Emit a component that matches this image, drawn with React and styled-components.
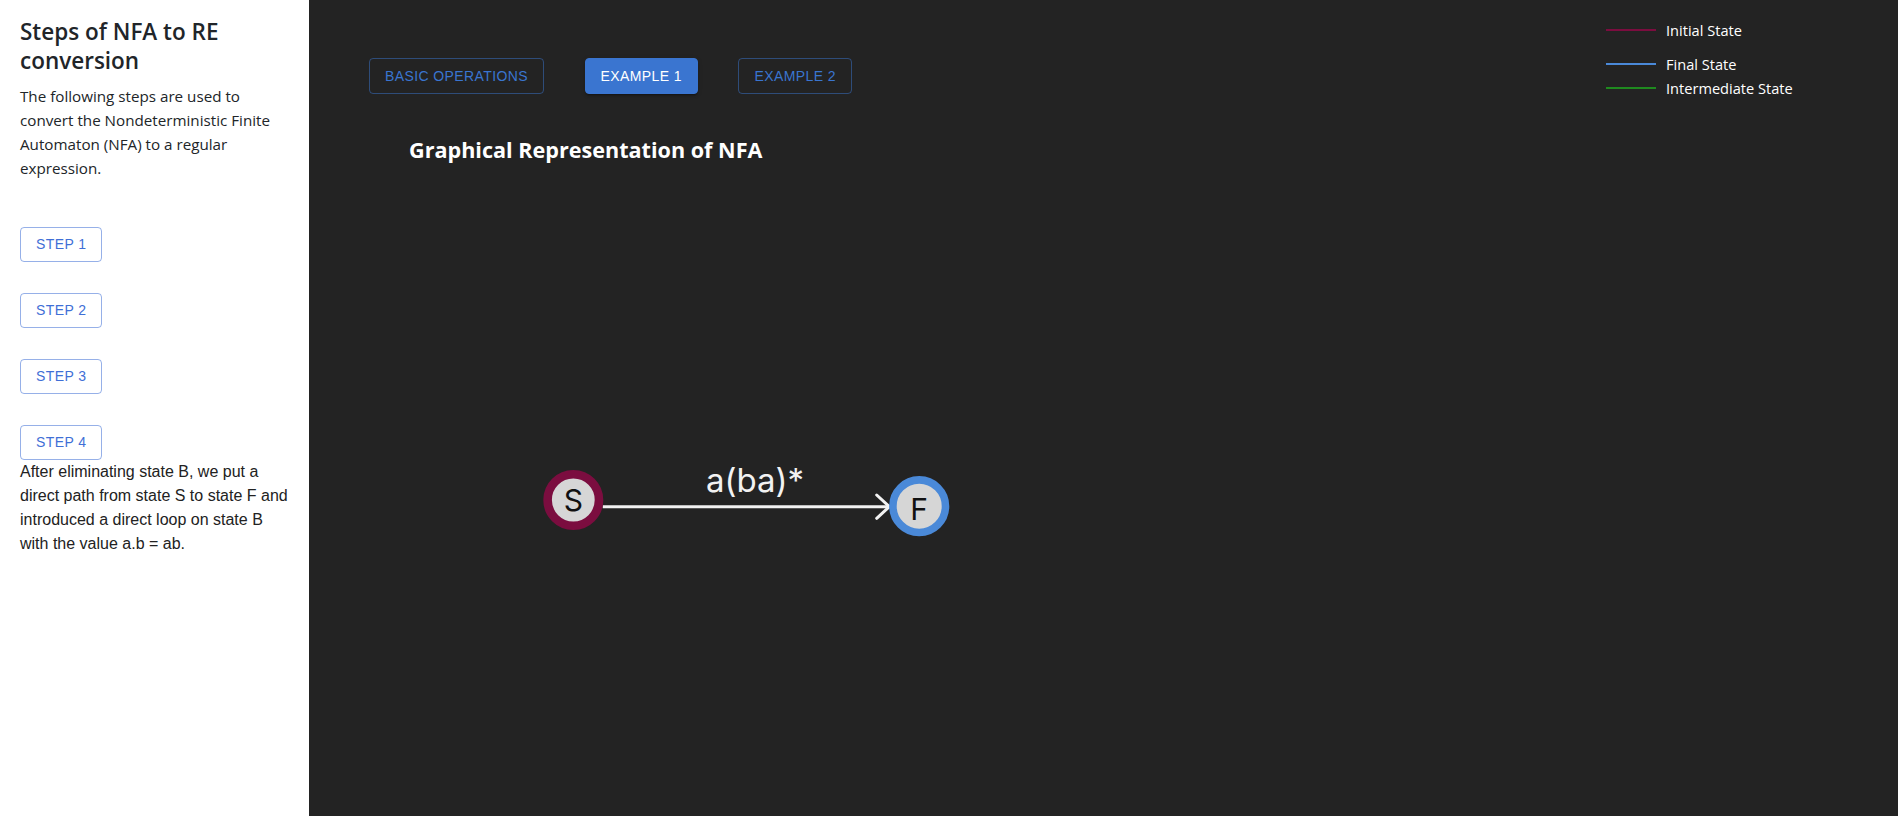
import React from "react";
import styled, { createGlobalStyle } from "styled-components";

const Global = createGlobalStyle`
  html, body { margin: 0; padding: 0; }
  body { font-family: "Open Sans", "Noto Sans", sans-serif; }
  * { box-sizing: border-box; }
`;

const Page = styled.div`
  display: flex;
  width: 100%;
  height: 100vh;
  overflow: hidden;
`;

const Sidebar = styled.aside`
  width: 309px;
  flex: 0 0 309px;
  background: #ffffff;
  padding: 18px 16px 0 20px;
  display: flex;
  flex-direction: column;
`;

const SideTitle = styled.h3`
  margin: 0 0 8px;
  font-family: "Open Sans", sans-serif;
  font-weight: 600;
  font-size: 22.5px;
  line-height: 28.8px;
  color: #212529;
`;

const Intro = styled.p`
  margin: 0;
  font-family: "Open Sans", sans-serif;
  font-size: 15.2px;
  line-height: 24px;
  color: #212529;
`;

const StepList = styled.div`
  display: flex;
  flex-direction: column;
  align-items: flex-start;
  gap: 31px;
  margin-top: 47px;
`;

const StepButton = styled.button`
  font-family: "Liberation Sans", Arial, sans-serif;
  font-size: 14px;
  font-weight: 500;
  letter-spacing: 0.4px;
  line-height: 24px;
  text-transform: uppercase;
  height: 35px;
  padding: 0 15px;
  border-radius: 4px;
  background: transparent;
  color: #3f6fd6;
  border: 1px solid rgba(63, 111, 214, 0.55);
  cursor: pointer;
`;

const StepText = styled.p`
  margin: 0;
  font-family: "Liberation Sans", Arial, sans-serif;
  font-size: 16px;
  line-height: 24.3px;
  color: #222222;
`;

const Main = styled.main`
  position: relative;
  flex: 1;
  background: #232323;
  display: flex;
  flex-direction: column;
`;

const Toolbar = styled.div`
  display: flex;
  gap: 40.5px;
  padding: 58px 0 0 60px;
  position: relative;
  z-index: 1;
`;

const TabButton = styled.button`
  font-family: "Liberation Sans", Arial, sans-serif;
  font-size: 14px;
  font-weight: 500;
  letter-spacing: 0.4px;
  line-height: 24px;
  text-transform: uppercase;
  height: 36px;
  padding: 0 15px;
  border-radius: 4px;
  cursor: pointer;
  color: ${(p) => (p.$active ? "#ffffff" : "#3a75d0")};
  background: ${(p) => (p.$active ? "#3a75d0" : "transparent")};
  border: 1px solid ${(p) => (p.$active ? "#3a75d0" : "rgba(58, 117, 208, 0.5)")};
  box-shadow: ${(p) =>
    p.$active
      ? "0 3px 1px -2px rgba(0,0,0,0.2), 0 2px 2px 0 rgba(0,0,0,0.14), 0 1px 5px 0 rgba(0,0,0,0.12)"
      : "none"};
`;

const GraphTitle = styled.h4`
  margin: 0;
  padding: 42px 0 0 100px;
  font-family: "Open Sans", sans-serif;
  font-weight: 700;
  font-size: 21.6px;
  line-height: 28px;
  color: #ffffff;
  position: relative;
  z-index: 1;
`;

const Legend = styled.div`
  position: absolute;
  top: 18px;
  left: 1297px;
  display: flex;
  flex-direction: column;
  z-index: 2;
`;

const LegendRow = styled.div`
  display: flex;
  align-items: center;
  gap: 10px;
  height: 24px;
  margin-bottom: ${(p) => p.$gap || 0}px;
`;

const LegendLine = styled.span`
  display: block;
  width: 50px;
  height: 2px;
  background: ${(p) => p.$color};
`;

const LegendLabel = styled.span`
  font-family: "Open Sans", sans-serif;
  font-size: 14.6px;
  color: #ffffff;
  line-height: 24px;
`;

const Canvas = styled.svg`
  position: absolute;
  inset: 0;
  width: 100%;
  height: 100%;
  z-index: 0;
`;

function StateNode({ cx, cy, r, stroke, sw, label, ty }) {
  return (
    <g>
      <circle cx={cx} cy={cy} r={r} fill="#d6d6d6" stroke={stroke} strokeWidth={sw} />
      <text
        x={cx}
        y={ty}
        textAnchor="middle"
        fontFamily="Inter, 'Liberation Sans', sans-serif"
        fontSize="30"
        fill="#111111"
      >
        {label}
      </text>
    </g>
  );
}

export default function App() {
  return (
    <>
      <Global />
      <Page>
        <Sidebar>
          <SideTitle>Steps of NFA to RE conversion</SideTitle>
          <Intro>
            The following steps are used to convert the Nondeterministic Finite
            Automaton (NFA) to a regular expression.
          </Intro>
          <StepList>
            <StepButton>Step 1</StepButton>
            <StepButton>Step 2</StepButton>
            <StepButton>Step 3</StepButton>
            <StepButton>Step 4</StepButton>
          </StepList>
          <StepText>
            After eliminating state B, we put a direct path from state S to state F
            and introduced a direct loop on state B with the value a.b = ab.
          </StepText>
        </Sidebar>
        <Main>
          <Canvas>
            <line x1="293.7" y1="506.7" x2="580" y2="506.7" stroke="#f2f2f2" strokeWidth="3" />
            <polyline
              points="567.7,495 580.3,506.7 567.7,518.3"
              fill="none"
              stroke="#f2f2f2"
              strokeWidth="3"
              strokeLinecap="round"
              strokeLinejoin="round"
            />
            <text
              x="446"
              y="492"
              textAnchor="middle"
              fontFamily="Inter, 'Liberation Sans', sans-serif"
              fontSize="33"
              fill="#f2f2f2"
            >
              a(ba)*
            </text>
            <StateNode cx={264.3} cy={500} r={25.7} sw={8.6} stroke="#7b0d3f" label="S" ty={511} />
            <StateNode cx={610.2} cy={506.2} r={26.3} sw={7.6} stroke="#4a89d8" label="F" ty={520} />
          </Canvas>
          <Toolbar>
            <TabButton>Basic Operations</TabButton>
            <TabButton $active>Example 1</TabButton>
            <TabButton>Example 2</TabButton>
          </Toolbar>
          <GraphTitle>Graphical Representation of NFA</GraphTitle>
          <Legend>
            <LegendRow $gap={10}>
              <LegendLine $color="#7b0d3f" />
              <LegendLabel>Initial State</LegendLabel>
            </LegendRow>
            <LegendRow>
              <LegendLine $color="#4a89d8" />
              <LegendLabel>Final State</LegendLabel>
            </LegendRow>
            <LegendRow>
              <LegendLine $color="#1f8a1f" />
              <LegendLabel>Intermediate State</LegendLabel>
            </LegendRow>
          </Legend>
        </Main>
      </Page>
    </>
  );
}
